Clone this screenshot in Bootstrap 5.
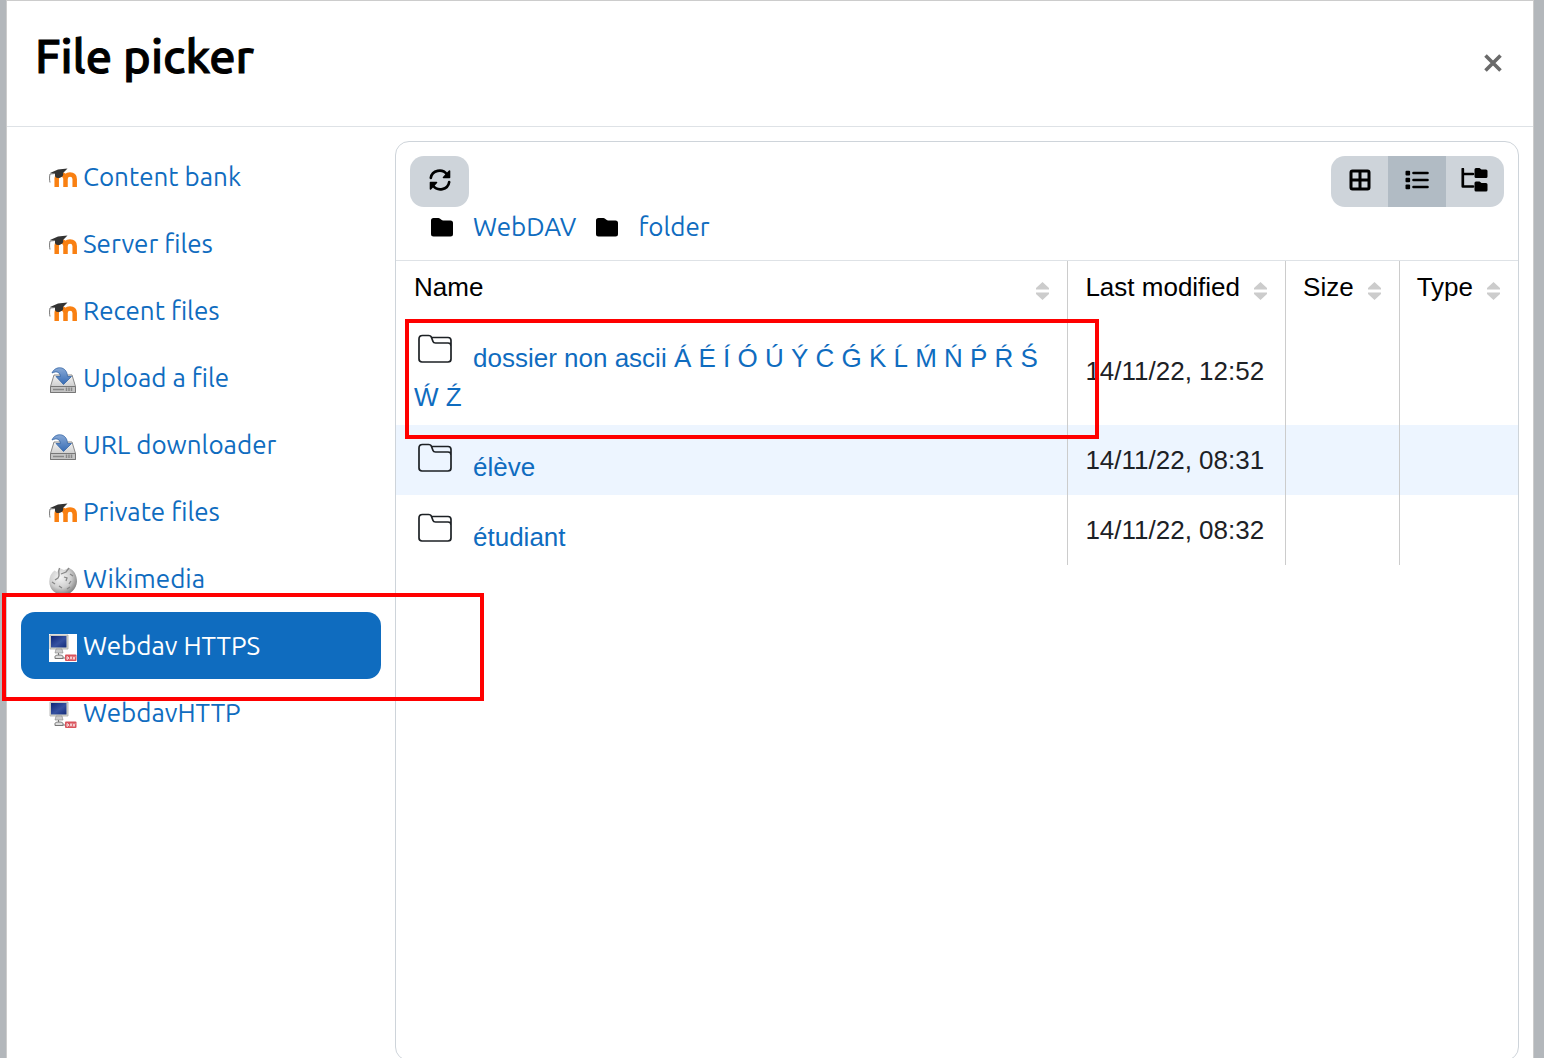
<!DOCTYPE html>
<html lang="en">
<head>
<meta charset="utf-8">
<meta name="viewport" content="width=device-width, initial-scale=1">
<title>File picker</title>
<link href="https://cdn.jsdelivr.net/npm/bootstrap@5.3.0/dist/css/bootstrap.min.css" rel="stylesheet">
<style>
  body { background: #b3b7bb; font: 26px/39px Ubuntu, "Noto Sans", sans-serif; height: 100vh; overflow: hidden; color: #1d2125; }
  a { color: #0f6cbf; text-decoration: none; }
  .fp-dialog { margin: 0 10px 0 6px; height: calc(100vh + 18px); border: 1px solid #ccc; }
  .fp-head { height: 126px; padding: 27px 28px; border-bottom: 1px solid #dee2e6; }
  .fp-title { font-size: 47px; line-height: 56px; font-weight: 500; color: #000; -webkit-text-stroke: 1px #000; }
  .fp-close { line-height: 0; margin-top: 26px; margin-right: 3px; color: #6a6a6a; }
  .fp-body { padding: 14px; gap: 14px; min-height: 0; }
  .fp-side { width: 360px; flex: none; padding-top: 2px; }
  .fp-side .nav-link { height: 67px; padding: 0 28px; gap: 6px; border-radius: 14px; color: #0f6cbf; white-space: nowrap; }
  .fp-side .nav-link.active { background: #0f6cbf; color: #fff; }
  .fp-side svg { width: 28px; height: 28px; flex: none; margin-top: 4px; }
  .fp-side .active svg { background: #fff; }
  .fp-panel { border: 1px solid #ced4da; border-radius: 14px; min-width: 0; }
  .fp-tools { padding: 14px 14px 0; height: 119px; border-bottom: 1px solid #dee2e6; }
  .fp-tools .btn { background: #ced4da; height: 51px; width: 58px; padding: 0 0 3px; border: 0; border-radius: 14px; color: #000; line-height: 0; }
  .fp-tools > div > .btn { width: 59px; }
  .fp-tools .btn-group .btn.active { background: #b1bbc4; }
  .fp-tools .btn-group .btn:last-child { width: 59px; }
  .fp-path { padding-left: 21px; gap: 20px; }
  .fp-path svg { margin-top: 2px; }
  .fp-table { font-family: "Liberation Sans", Arial, sans-serif; }
  .fp-table th, .fp-table td { white-space: nowrap; border-left: 1px solid #ccc; }
  .fp-table th:first-child, .fp-table td:first-child { border-left: 0; width: 100%; white-space: normal; }
  .fp-table td { padding: 9px 19px 8px 17px; vertical-align: middle; color: #1d2125; }
  .fp-table td:first-child { padding-left: 18px; }
  .fp-table th { height: 55px; padding: 0; font-weight: 400; vertical-align: top; }
  .fp-sort { width: 100%; height: 52px; padding: 0 18px 0 17px; gap: 14px; color: #000; background: none; border: 0; }
  .fp-table th:first-child .fp-sort { padding-left: 18px; }
  .fp-sort svg { margin-top: 7px; flex: none; }
  .fp-table tbody tr:nth-child(even) td { background: #edf5ff; }
  .fp-folder { width: 42px; height: 40px; margin-right: 17px; vertical-align: 2px; color: #1d2125; }
  .fp-mark { position: absolute; border: 4px solid #f00; pointer-events: none; z-index: 3; }
  .fp-mark-repo { inset: -19px -103px -22px -19px; }
  .fp-mark-name { inset: 3px -32px -14px 9px; }
</style>
<script src="https://cdn.jsdelivr.net/npm/bootstrap@5.3.0/dist/js/bootstrap.bundle.min.js"></script>
</head>
<body>
<svg class="position-absolute" width="0" height="0" aria-hidden="true">
  <defs>
    <linearGradient id="disk" x2="0" y2="1"><stop stop-color="#f5f5f5"/><stop offset="1" stop-color="#bbb"/></linearGradient>
    <linearGradient id="arrow" x2="0" y2="1"><stop stop-color="#88a9d6"/><stop offset="1" stop-color="#376cb5"/></linearGradient>
    <radialGradient id="ball" cx=".4" cy=".35" r=".65"><stop stop-color="#f4f4f4"/><stop offset=".6" stop-color="#d0d0d0"/><stop offset="1" stop-color="#858585"/></radialGradient>
    <linearGradient id="screen" x2="1" y2="1"><stop stop-color="#0b2478"/><stop offset=".55" stop-color="#3651a0"/><stop offset="1" stop-color="#142c7a"/></linearGradient>
  </defs>
  <symbol id="i-moodle" viewBox="0 0 28 28">
    <path d="M7.700 22V13.500Q8 9.500 12 9.500T16.500 13.500V22M16.500 14Q16.500 9.500 21 9.500T25.700 14V22" fill="none" stroke="#f98012" stroke-width="4.500"/>
    <path d="M1 8 9 4.500 18.500 3.500 14 8C15 10.500 13 12.500 10 13C7 13.500 5.500 11.500 6 9Z" fill="#333"/>
    <path d="M6 8.500 1 9C.5 11.500.3 14.500 1 17.500" fill="none" stroke="#777" stroke-width="1"/>
  </symbol>
  <symbol id="i-upload" viewBox="0 0 28 28">
    <path d="M5 9H23L26.500 20.500V26.500H1.500V20.500Z" fill="url(#disk)" stroke="#888"/>
    <path d="M1.500 20.500H26.500V26.500H1.500Z" fill="#c4c4c4" stroke="#777"/>
    <path d="M4 23.500H15M17.500 21.500V25M20 21.500V25M22.500 21.500V25" stroke="#888" stroke-width="1.500"/>
    <path d="M3 7C6-.5 18-.5 18.500 10.500H22.500L14.500 18.500 7 10.500H11.500C11 6.500 8 4.500 3 7Z" fill="url(#arrow)" stroke="#3465a4" stroke-width=".8"/>
  </symbol>
  <symbol id="i-wiki" viewBox="0 0 28 28">
    <path d="M5.500 3.500 8 5 10.500 1 15 3 20 1C25 3 28 8 28 14.500C27.500 22 21.500 28 14 28C6 27.500.3 22 .3 14.500C.3 10 2 6 5.500 3.500Z" fill="url(#ball)"/>
    <path d="M10.500 1C8 7 12 8 9 11M9 11 6 13M20 1 17 5 12 7M3 15 6 17M15 10 18 11 17 14M22 14 20 17M10 19 13 21M18 22 21 20M21 7 24 9" fill="none" stroke="#888" stroke-width="1.300"/>
  </symbol>
  <symbol id="i-dav" viewBox="0 0 28 28">
    <path d="M1 1H19V15H1Z" fill="#dcdccf" stroke="#aaa" stroke-width=".8"/>
    <path d="M2 2H17.500V13.500H2Z" fill="url(#screen)"/>
    <path d="M7 15H13L14 19H6Z" fill="#ccc" stroke="#888" stroke-width=".6"/>
    <path d="M9.500 19V21M6 22.500C6 20.500 14 20.500 14 22.500V24.500H6ZM14 24H17" fill="#ddd" stroke="#777"/>
    <rect x="16" y="20.500" width="11.500" height="6.500" rx="1" fill="#d9535c"/>
    <path d="M18 25.500V22.500L20 24 18 25.500M21 25.500 22 22.500 23 25.500M24 22.500 25 25.500 26 22.500" fill="none" stroke="#fff" stroke-width=".8"/>
  </symbol>
  <symbol id="i-closed" viewBox="0 0 22 19">
    <path d="M2.500 0H7.500C9.500 0 10 2.500 12 2.500H19.500Q22 2.500 22 5V16Q22 18.500 19.500 18.500H2.500Q0 18.500 0 16V2.500Q0 0 2.500 0Z" fill="currentColor"/>
  </symbol>
  <symbol id="i-folder" viewBox="0 0 42 40">
    <path d="M8.500 10.500H14.500Q17 10.500 17.500 12.500H34Q37 12.500 37 15.500V34Q37 37 34 37H8Q5 37 5 34V14Q5 10.500 8.500 10.500ZM17.500 12.500 19 16.500Q19.500 18 21.500 18H34Q37 18 37 21" fill="none" stroke="currentColor" stroke-width="1.700"/>
  </symbol>
  <symbol id="i-sort" viewBox="0 0 13 18">
    <path d="M6.500 0 13 6V7.500H0V6ZM0 10.500H13V12L6.500 18 0 12Z" fill="#ccc"/>
  </symbol>
</svg>

<main class="fp-dialog bg-white d-flex flex-column">
  <header class="fp-head d-flex justify-content-between align-items-start">
    <h1 class="fp-title m-0">File picker</h1>
    <button type="button" class="fp-close btn border-0 p-0" aria-label="Close">
      <svg width="18" height="18" viewBox="0 0 18 18"><path d="M1.500 1.500 16.500 16.500M16.500 1.500 1.500 16.500" stroke="currentColor" stroke-width="3.600"/></svg>
    </button>
  </header>

  <div class="fp-body d-flex flex-grow-1">
    <nav class="fp-side nav nav-pills flex-column flex-nowrap" aria-label="Repositories">
      <a class="nav-link d-flex align-items-center" href="#"><svg><use href="#i-moodle"/></svg>Content bank</a>
      <a class="nav-link d-flex align-items-center" href="#"><svg><use href="#i-moodle"/></svg>Server files</a>
      <a class="nav-link d-flex align-items-center" href="#"><svg><use href="#i-moodle"/></svg>Recent files</a>
      <a class="nav-link d-flex align-items-center" href="#"><svg><use href="#i-upload"/></svg>Upload a file</a>
      <a class="nav-link d-flex align-items-center" href="#"><svg><use href="#i-upload"/></svg>URL downloader</a>
      <a class="nav-link d-flex align-items-center" href="#"><svg><use href="#i-moodle"/></svg>Private files</a>
      <a class="nav-link d-flex align-items-center" href="#"><svg><use href="#i-wiki"/></svg>Wikimedia</a>
      <a class="nav-link active d-flex align-items-center position-relative" href="#" aria-current="page"><svg><use href="#i-dav"/></svg>Webdav HTTPS<span class="fp-mark fp-mark-repo"></span></a>
      <a class="nav-link d-flex align-items-center" href="#"><svg><use href="#i-dav"/></svg>WebdavHTTP</a>
    </nav>

    <section class="fp-panel flex-grow-1">
      <div class="fp-tools">
        <div class="d-flex justify-content-between">
          <button type="button" class="btn" aria-label="Refresh">
            <svg width="22" height="22" viewBox="0 0 22 22" fill="none" stroke="currentColor" stroke-width="2.600" stroke-linecap="round" stroke-linejoin="round"><path d="M1.800 9C3 1 13.500-.8 18 5.500M20.200 13C19 21 8.500 22.800 4 16.500"/><path d="M20.500 2V8.500H14.500ZM1.500 20V13.500H7.500Z" fill="currentColor" stroke-width="1.600"/></svg>
          </button>
          <div class="btn-group" role="group" aria-label="View">
            <button type="button" class="btn" aria-label="Icons">
              <svg width="22" height="22" viewBox="0 0 22 22" fill="none" stroke="currentColor" stroke-width="3"><rect x="2" y="2" width="18" height="18" rx="1.500"/><path d="M11 2V20M2 11H20"/></svg>
            </button>
            <button type="button" class="btn active" aria-label="List">
              <svg width="24" height="20" viewBox="0 0 24 20"><path d="M8.500 3H22.500M8.500 10H22.500M8.500 17H22.500" stroke="currentColor" stroke-width="2.600" stroke-linecap="round"/><g fill="currentColor"><rect x=".5" y=".8" width="4.600" height="4.600" rx="1"/><rect x=".5" y="7.700" width="4.600" height="4.600" rx="1"/><rect x=".5" y="14.600" width="4.600" height="4.600" rx="1"/></g></svg>
            </button>
            <button type="button" class="btn" aria-label="Tree">
              <svg width="27" height="24" viewBox="0 0 27 24"><path d="M1.800 1V18.500H12M1.800 6H12" fill="none" stroke="currentColor" stroke-width="2.700" stroke-linecap="round" stroke-linejoin="round"/><path d="M15 0H18.500L20.500 1.500H25Q26.500 1.500 26.500 3V8.500Q26.500 10 25 10H15Q13.500 10 13.500 8.500V1.500Q13.500 0 15 0ZM15 13.500H18.500L20.500 15H25Q26.500 15 26.500 16.500V22Q26.500 23.500 25 23.500H15Q13.500 23.500 13.500 22V15Q13.500 13.500 15 13.500Z" fill="currentColor"/></svg>
            </button>
          </div>
        </div>
        <nav class="fp-path d-flex align-items-center text-black" aria-label="Path">
          <svg width="22" height="19"><use href="#i-closed"/></svg><a href="#">WebDAV</a>
          <svg width="22" height="19"><use href="#i-closed"/></svg><a href="#">folder</a>
        </nav>
      </div>

      <table class="fp-table w-100">
        <thead>
          <tr>
            <th scope="col"><button type="button" class="fp-sort d-flex justify-content-between align-items-center">Name<svg width="13" height="18"><use href="#i-sort"/></svg></button></th>
            <th scope="col"><button type="button" class="fp-sort d-flex justify-content-between align-items-center">Last modified<svg width="13" height="18"><use href="#i-sort"/></svg></button></th>
            <th scope="col"><button type="button" class="fp-sort d-flex justify-content-between align-items-center">Size<svg width="13" height="18"><use href="#i-sort"/></svg></button></th>
            <th scope="col"><button type="button" class="fp-sort d-flex justify-content-between align-items-center">Type<svg width="13" height="18"><use href="#i-sort"/></svg></button></th>
          </tr>
        </thead>
        <tbody>
          <tr>
            <td class="position-relative"><a href="#"><svg class="fp-folder"><use href="#i-folder"/></svg>dossier non ascii Á É Í Ó Ú Ý Ć Ǵ Ḱ Ĺ Ḿ Ń Ṕ Ŕ Ś Ẃ Ź</a><span class="fp-mark fp-mark-name"></span></td>
            <td>14/11/22, 12:52</td><td></td><td></td>
          </tr>
          <tr>
            <td><a href="#"><svg class="fp-folder"><use href="#i-folder"/></svg>élève</a></td>
            <td>14/11/22, 08:31</td><td></td><td></td>
          </tr>
          <tr>
            <td><a href="#"><svg class="fp-folder"><use href="#i-folder"/></svg>étudiant</a></td>
            <td>14/11/22, 08:32</td><td></td><td></td>
          </tr>
        </tbody>
      </table>
    </section>
  </div>
</main>
</body>
</html>
